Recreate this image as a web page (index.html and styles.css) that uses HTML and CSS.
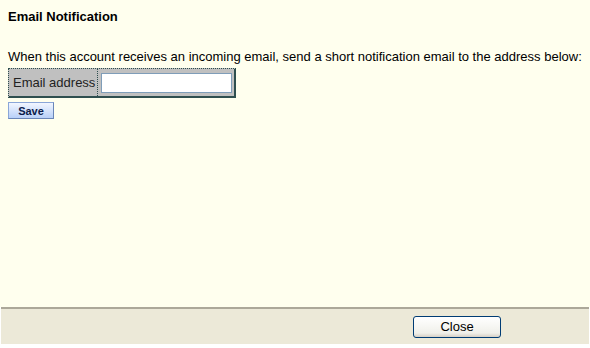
FILE: index.html
```html
<!DOCTYPE html>
<html lang="en">
<head>
    <meta charset="UTF-8">
    <title>Email Notification</title>
    <link rel="stylesheet" href="styles.css">
</head>
<body>
    <div class="main">
        <h3 class="title">Email Notification</h3>
        <p class="intro">When this account receives an incoming email, send a short notification email to the address below:</p>
        <table class="form-table">
            <tr>
                <td class="label">Email address</td>
                <td class="field"><input type="text" class="email-input"></td>
            </tr>
        </table>
        <button class="save-btn">Save</button>
    </div>
    <div class="footer">
        <button class="close-btn">Close</button>
    </div>
</body>
</html>
```

FILE: styles.css
```css
body {
    margin: 0;
    font-family: "Liberation Sans", Arial, sans-serif;
    font-size: 13px;
    background: #fff;
    height: 348px;
}
.main {
    background-color: #ffffee;
    height: 307px;
    padding: 0 8px;
    box-sizing: border-box;
    overflow: hidden;
}
.title {
    margin: 0;
    padding-top: 9px;
    font-size: 13px;
    line-height: 15px;
    font-weight: bold;
}
.intro {
    margin: 25px 0 3px;
    line-height: 16px;
    color: #000;
}
.form-table {
    border-collapse: separate;
    border-spacing: 0;
    background: #c0c0c0;
    border-top: 1px dotted #2f4f4f;
    border-left: 1px dotted #2f4f4f;
    border-right: 2px solid #2f4f4f;
    border-bottom: 2px solid #2f4f4f;
}
.form-table td {
    padding: 0;
    height: 27px;
}
.label {
    padding: 0 2px 0 4px !important;
    border-right: 1px dotted #2f4f4f;
    font-size: 13px;
    color: #222;
}
.field {
    padding: 0 2px 0 3px !important;
}
.email-input {
    display: block;
    width: 131px;
    height: 20px;
    box-sizing: border-box;
    border: 1px solid #7f9db9;
    background: #fff;
    margin: 0;
}
.save-btn {
    display: block;
    margin-top: 4px;
    width: 46px;
    height: 17px;
    padding: 0;
    font-family: "Liberation Sans", Arial, sans-serif;
    font-size: 11px;
    font-weight: bold;
    color: #0a1a4a;
    border: 1px solid #8aa6d8;
    border-right-color: #6a86b8;
    border-bottom-color: #6a86b8;
    background: linear-gradient(#f2f6ff, #b8d0f8);
}
.footer {
    background-color: #ece9d8;
    border-top: 2px solid #aca899;
    height: 35px;
    margin: 0 1px 0 1px;
    display: flex;
    justify-content: flex-end;
    align-items: center;
    padding-right: 88px;
}
.close-btn {
    width: 88px;
    height: 22px;
    padding: 0;
    font-family: "Liberation Sans", Arial, sans-serif;
    font-size: 13px;
    color: #000;
    border: 1px solid #003c74;
    border-radius: 3px;
    background: linear-gradient(#ffffff, #f0f0ea 80%, #d6d0c5);
}
```
